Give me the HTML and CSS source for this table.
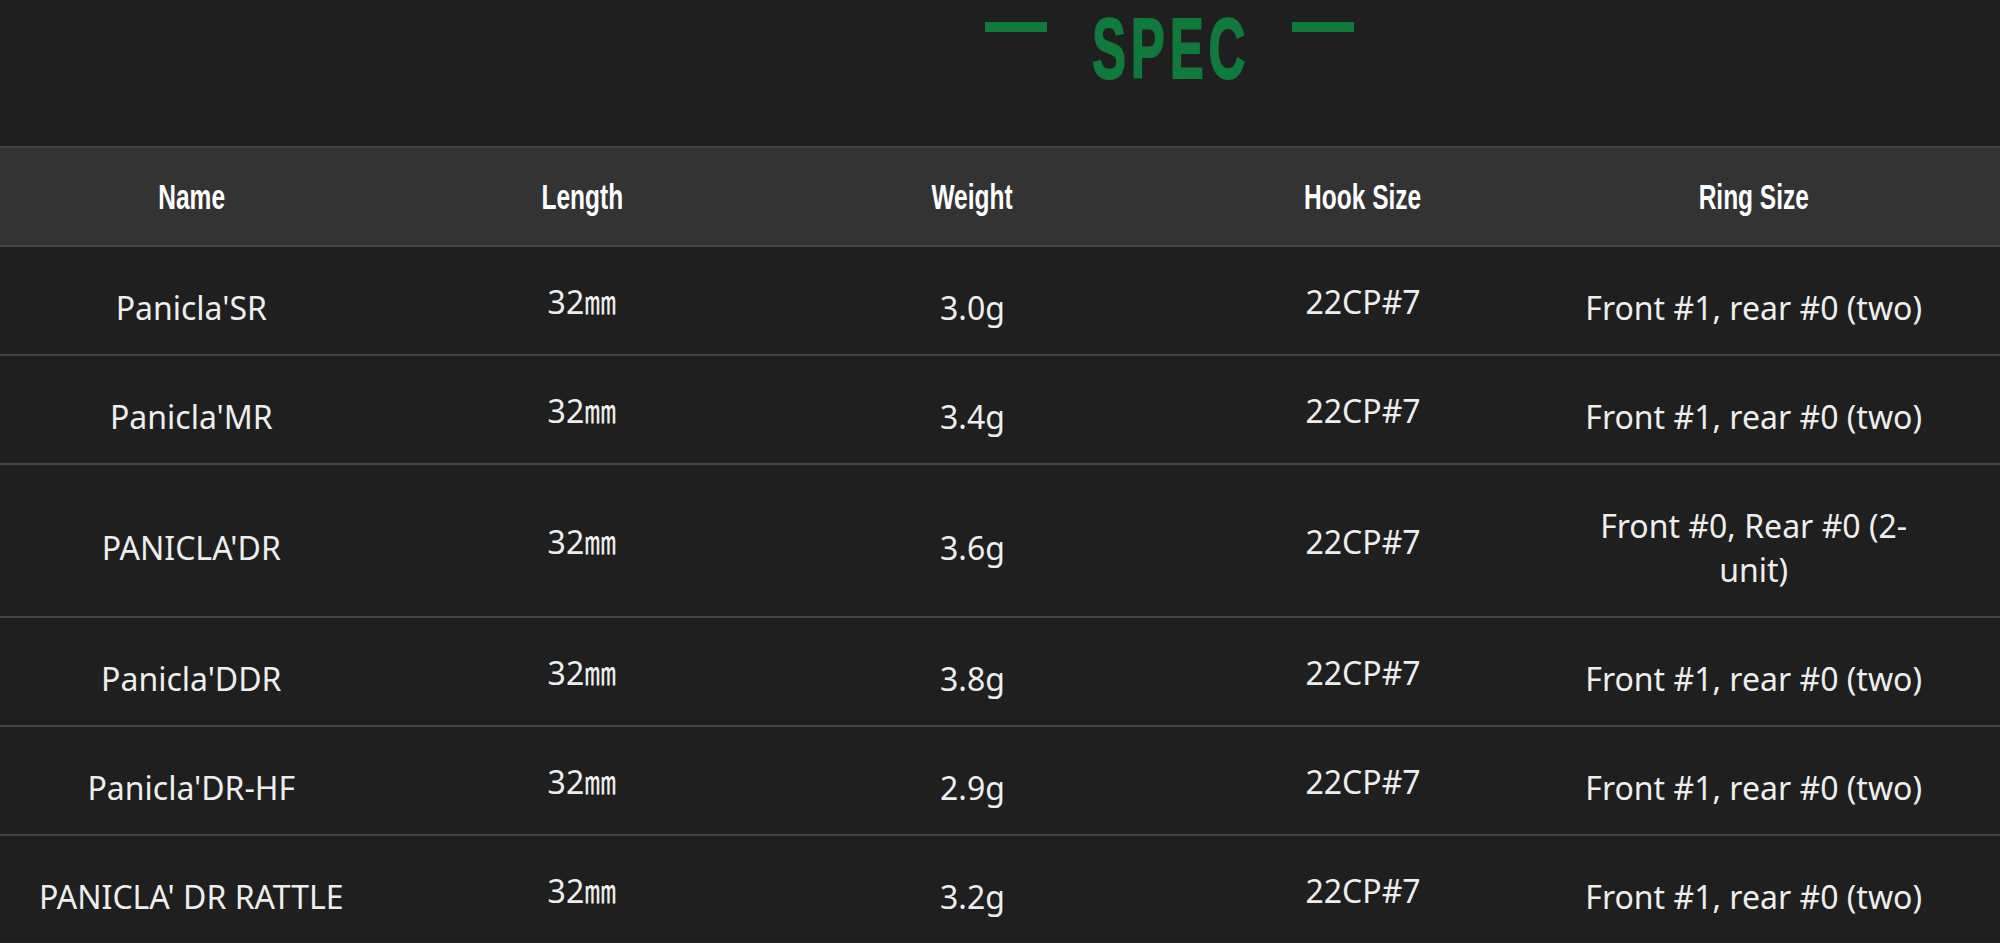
FILE: index.html
```html
<!DOCTYPE html>
<html lang="en">
<head>
    <meta charset="UTF-8">
    <meta name="viewport" content="width=device-width, initial-scale=1.0">
    <title>Spec</title>

    <link rel="stylesheet" href="styles.css">
</head>
<body>
    <div class="spec-title">
        <span class="dash"></span>
        <div class="spec-word"><span>SPEC</span></div>
        <span class="dash"></span>
    </div>

    <div class="spec-table">
        <div class="spec-row spec-head">
            <div class="cell"><span>Name</span></div>
            <div class="cell"><span>Length</span></div>
            <div class="cell"><span>Weight</span></div>
            <div class="cell"><span>Hook Size</span></div>
            <div class="cell"><span>Ring Size</span></div>
        </div>

        <div class="spec-row">
            <div class="cell">Panicla'SR</div>
            <div class="cell cell-up">32㎜</div>
            <div class="cell">3.0g</div>
            <div class="cell cell-up">22CP#7</div>
            <div class="cell">Front #1, rear #0 (two)</div>
        </div>
        <div class="spec-row">
            <div class="cell">Panicla'MR</div>
            <div class="cell cell-up">32㎜</div>
            <div class="cell">3.4g</div>
            <div class="cell cell-up">22CP#7</div>
            <div class="cell">Front #1, rear #0 (two)</div>
        </div>
        <div class="spec-row">
            <div class="cell">PANICLA'DR</div>
            <div class="cell cell-up">32㎜</div>
            <div class="cell">3.6g</div>
            <div class="cell cell-up">22CP#7</div>
            <div class="cell">Front #0, Rear #0 (2-unit)</div>
        </div>
        <div class="spec-row">
            <div class="cell">Panicla'DDR</div>
            <div class="cell cell-up">32㎜</div>
            <div class="cell">3.8g</div>
            <div class="cell cell-up">22CP#7</div>
            <div class="cell">Front #1, rear #0 (two)</div>
        </div>
        <div class="spec-row">
            <div class="cell">Panicla'DR-HF</div>
            <div class="cell cell-up">32㎜</div>
            <div class="cell">2.9g</div>
            <div class="cell cell-up">22CP#7</div>
            <div class="cell">Front #1, rear #0 (two)</div>
        </div>
        <div class="spec-row">
            <div class="cell">PANICLA' DR RATTLE</div>
            <div class="cell cell-up">32㎜</div>
            <div class="cell">3.2g</div>
            <div class="cell cell-up">22CP#7</div>
            <div class="cell">Front #1, rear #0 (two)</div>
        </div>
    </div>
</body>
</html>
```

FILE: styles.css
```css
/* Page */
body {
    margin: 0;
    padding: 0;
    background-color: #1f1f1f;
    color: #eee;
    font-family: "Noto Sans", "Noto Sans CJK SC", sans-serif;
    overflow-x: hidden;
}

/* Title with the two green dashes */
.spec-title {
    height: 146px;
    box-sizing: border-box;
    padding: 6px 0 0 338px;
    display: flex;
    justify-content: center;
    align-items: flex-start;
}

.spec-title .dash {
    width: 62px;
    height: 10px;
    margin-top: 16px;
    background-color: #0f7a3c;
}

.spec-word {
    width: 153px;
    margin: 0 47px 0 45px;
    white-space: nowrap;
}

.spec-word span {
    display: inline-block;
    font-family: "Liberation Sans", Arial, sans-serif;
    font-weight: bold;
    font-size: 85px;
    line-height: 85px;
    letter-spacing: 8px;
    color: #0f7a3c;
    -webkit-text-stroke: 2px #0f7a3c;
    transform: scaleX(0.6);
    transform-origin: 0 0;
}

/* Table rows */
.spec-row {
    display: grid;
    grid-template-columns: repeat(5, 390.6px);
    align-items: center;
    margin-left: -4px;
    border-bottom: 2px solid #444;
}

.cell {
    padding: 39px 20px 24px;
    font-size: 32px;
    line-height: 44px;
    text-align: center;
}

.cell-up {
    padding-top: 33px;
    padding-bottom: 30px;
}

/* Header row */
.spec-head {
    background-color: #333;
    border-top: 2px solid #404040;
    height: 97px;
}

.spec-head .cell {
    padding: 0;
    line-height: normal;
}

.spec-head .cell span {
    display: inline-block;
    font-family: "Liberation Sans", Arial, sans-serif;
    font-weight: bold;
    font-size: 35px;
    color: #fff;
    transform: scaleX(0.7);
}
```
